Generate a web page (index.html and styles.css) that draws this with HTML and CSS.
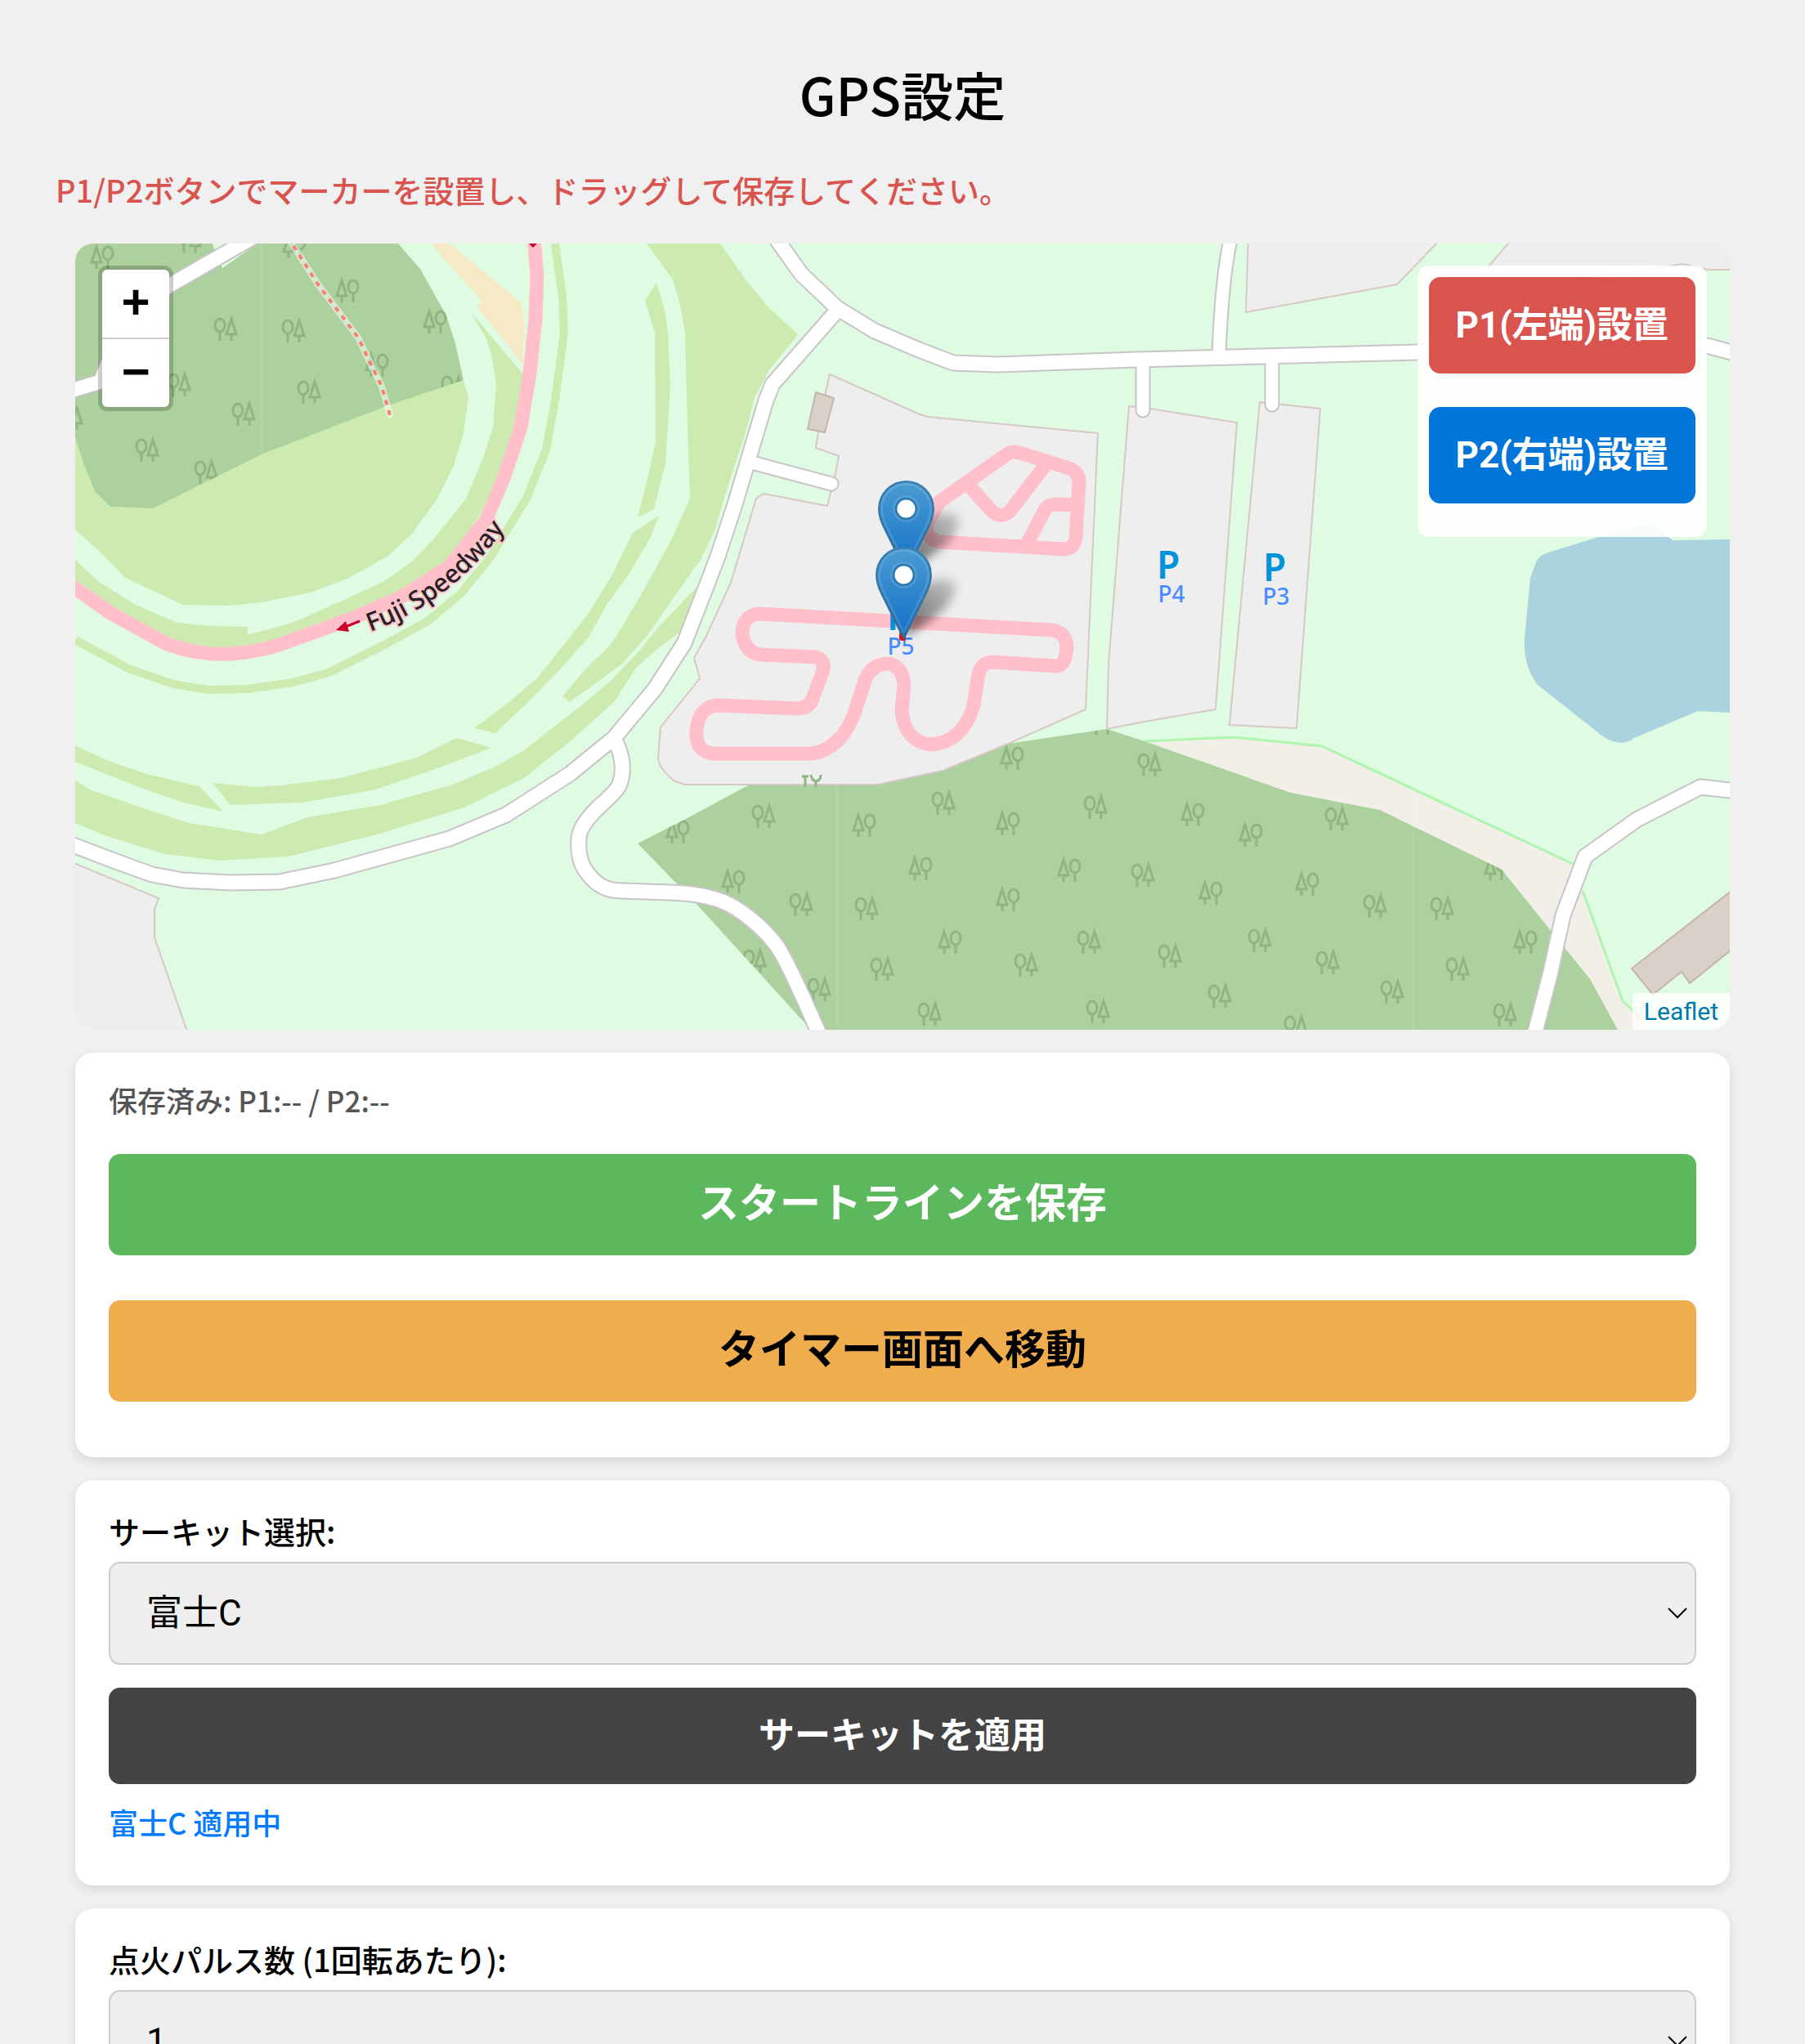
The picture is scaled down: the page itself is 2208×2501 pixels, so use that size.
FILE: index.html
```html
<!DOCTYPE html>
<html lang="ja">
<head>
    <meta charset="UTF-8">
    <meta name="viewport" content="width=device-width, initial-scale=1.0">
    <title>GPS設定</title>
    <link rel="stylesheet" href="styles.css">
</head>
<body>
    <main class="page">
        <h1>GPS設定</h1>
        <p class="notice">P1/P2ボタンでマーカーを設置し、ドラッグして保存してください。</p>

        <div class="map">
            <svg class="map-canvas" viewBox="92 298 2024 962" preserveAspectRatio="xMidYMid slice" role="img" aria-label="地図">
                <defs>
                    <g id="tree-a">
                        <path d="M-7 -13 L-13 6 H-1 Z M-7 6 V14"/>
                        <path d="M7 3 V14"/>
                        <ellipse cx="7" cy="-5" rx="6" ry="8"/>
                    </g>
                    <g id="tree-b">
                        <path d="M7 -13 L1 6 H13 Z M7 6 V14"/>
                        <path d="M-7 3 V14"/>
                        <ellipse cx="-7" cy="-5" rx="6" ry="8"/>
                    </g>
                    <path id="wood-west-shape" d="M92 298 H260 L264 311 272 328 315 298 H487 L514 329 546 386 557 420 567 465 475 496 322 555 187 622 135 620 116 601 102 566 92 535Z"/>
                    <path id="wood-south-shape" d="M780 1032 L837 1003 917 960 H1073 L1153 943 1233 910 1354 892 1400 907 1579 970 1688 991 1837 1064 1898 1140 1945 1198 1979 1260 H992 L851 1105Z"/>
                    <clipPath id="wood-west"><use href="#wood-west-shape"/></clipPath>
                    <clipPath id="wood-south"><use href="#wood-south-shape"/></clipPath>
                    <linearGradient id="pin-fill" x1="0" y1="0" x2="0" y2="1">
                        <stop offset="0" stop-color="#4b9cd3"/>
                        <stop offset="1" stop-color="#126fc6"/>
                    </linearGradient>
                    <linearGradient id="pin-edge" x1="0" y1="0" x2="0" y2="1">
                        <stop offset="0" stop-color="#3a80b4"/>
                        <stop offset="1" stop-color="#2e6c97"/>
                    </linearGradient>
                    <linearGradient id="shadow-fill" x1="0" y1="1" x2="1" y2="0">
                        <stop offset="0" stop-color="#000" stop-opacity="0.6"/>
                        <stop offset="1" stop-color="#000" stop-opacity="0.15"/>
                    </linearGradient>
                    <filter id="soft" x="-50%" y="-50%" width="200%" height="200%">
                        <feGaussianBlur stdDeviation="6"/>
                    </filter>
                    <g id="pin">
                        <path d="M12.5 .5C5.9 .5 .5 5.9 .5 12.5c0 3 .9 5.600 2.300 8.400L12.500 40.500 22.200 20.900c1.400-2.800 2.300-5.400 2.300-8.400C24.500 5.900 19.100 .5 12.500 .5z" fill="url(#pin-fill)" stroke="url(#pin-edge)"/>
                        <path d="M12.500 1.600C6.500 1.600 1.600 6.500 1.600 12.500c0 2.800 .9 5.300 2.200 7.900L12.500 38l8.700-17.600c1.300-2.600 2.200-5.100 2.200-7.900C23.400 6.500 18.500 1.600 12.500 1.600z" fill="none" stroke="#fff" stroke-opacity=".12"/>
                        <circle cx="12.500" cy="12.500" r="5.500" fill="none" stroke="#fff" stroke-opacity=".12"/>
                        <circle cx="12.500" cy="12.500" r="4.500" fill="#fff" stroke="#2f7bb0"/>
                    </g>
                </defs>

                <rect class="ground" x="92" y="298" width="2024" height="962"/>

                <!-- grass -->
                <g class="grass">
                    <path d="M567 465 L573 486 567 530 555 570 535 610 505 652 475 680 425 708 380 725 320 737 280 741 224 740 185 722 152 706 125 678 92 648 V535Z"/>
                    <path d="M577 383 L595 415 601 433 607 470 603 523 590 563 570 610 530 660 503 688 469 712 414 737 358 762 302 777 303 767 260 766 217 762 166 740 121 712 92 685 V720 L140 760 200 788 277 795 340 788 430 752 492 723 532 700 559 673 585 633 608 590 626 540 635 490 640 458Z"/>
                    <path d="M803 346 L789 368 801 407 802 540 791 590 780 633 800 623 814 567 820 473 817 407 814 383Z"/>
                    <path d="M806 631 L774 652 747 707 720 750 697 780 657 830 619 862 580 891 606 897 648 857 684 820 720 780 742 740 769 703 796 657Z"/>
                    <path d="M559 903 L601 915 527 943 456 967 369 982 282 985 260 958 313 963 344 961 416 952 469 938 510 927Z"/>
                    <path d="M92 912 L130 930 179 947 244 962 273 993 224 982 170 963 92 932Z"/>
                    <path d="M791 298 H881 L912 342 939 375 976 409 941 453 923 487 912 530 892 590 874 650 858 683 823 733 790 780 760 813 697 859 688 852 715 820 746 790 753 780 787 723 823 657 844 610 841 523 838 407 832 373 823 342Z"/>
                    <path d="M92 955 L112 967 170 987 231 1007 320 1021 376 1000 465 985 554 960 608 937 641 918 724 853 747 833 785 793 803 770 858 712 845 750 830 775 805 793 778 817 752 858 700 905 641 952 568 988 465 1020 353 1048 269 1053 202 1045 130 1023 92 1007Z"/>
                </g>
                <path class="grass-line" d="M679 298 L688 363 690 407 679 490 668 550 644 610 599 683 563 727 523 760 474 787 402 823 358 835 304 843 255 844 211 837 157 818 92 783"/>
                <path class="sand" d="M527 298 H550 L637 370 642 397 639 445 584 376 589 368Z"/>

                <!-- bare land, woods and water -->
                <path class="land" d="M1354 892 L1400 907 1509 902 1617 913 1926 1058 1936 1090 1985 1225 2009 1247 V1260 H1979 L1837 1064 1579 970Z"/>
                <path class="hedge" d="M1400 907 L1509 902 1617 913 1926 1058 M1936 1090 L1985 1225 2009 1247"/>
                <use class="wood" href="#wood-west-shape"/>
                <use class="wood" href="#wood-south-shape"/>
                <path class="water" d="M2116 660 L2046 661 2020 640 1952 658 1891 677 Q1882 681 1879 688 L1872 707 1865 780 Q1863 815 1881 838 L1962 902 Q1985 915 1999 903 L2077 870 2116 872Z"/>

                <g class="trees" clip-path="url(#wood-west)">
                    <use href="#tree-a" x="125" y="315"/>
                    <use href="#tree-a" x="360" y="302"/>
                    <use href="#tree-a" x="425" y="356"/>
                    <use href="#tree-a" x="532" y="394"/>
                    <use href="#tree-a" x="461" y="447"/>
                    <use href="#tree-b" x="232" y="295"/>
                    <use href="#tree-b" x="276" y="403"/>
                    <use href="#tree-b" x="359" y="405"/>
                    <use href="#tree-b" x="219" y="471"/>
                    <use href="#tree-b" x="378" y="480"/>
                    <use href="#tree-b" x="298" y="507"/>
                    <use href="#tree-b" x="180" y="551"/>
                    <use href="#tree-b" x="252" y="578"/>
                    <use href="#tree-b" x="554" y="474"/>
                    <use href="#tree-b" x="87" y="512"/>
                </g>
                <g class="trees" clip-path="url(#wood-south)">
                    <use href="#tree-a" x="1238" y="928"/>
                    <use href="#tree-a" x="1057" y="1010"/>
                    <use href="#tree-a" x="1233" y="1008"/>
                    <use href="#tree-a" x="1126" y="1063"/>
                    <use href="#tree-a" x="1308" y="1065"/>
                    <use href="#tree-a" x="1233" y="1101"/>
                    <use href="#tree-a" x="1162" y="1153"/>
                    <use href="#tree-a" x="897" y="1079"/>
                    <use href="#tree-a" x="829" y="1018"/>
                    <use href="#tree-a" x="1459" y="997"/>
                    <use href="#tree-a" x="1530" y="1022"/>
                    <use href="#tree-a" x="1481" y="1093"/>
                    <use href="#tree-a" x="1599" y="1082"/>
                    <use href="#tree-a" x="1866" y="1153"/>
                    <use href="#tree-a" x="1830" y="1063"/>
                    <use href="#tree-b" x="1406" y="936"/>
                    <use href="#tree-b" x="1154" y="983"/>
                    <use href="#tree-b" x="1340" y="988"/>
                    <use href="#tree-b" x="934" y="999"/>
                    <use href="#tree-b" x="1398" y="1071"/>
                    <use href="#tree-b" x="980" y="1107"/>
                    <use href="#tree-b" x="1060" y="1112"/>
                    <use href="#tree-b" x="1332" y="1153"/>
                    <use href="#tree-b" x="1255" y="1181"/>
                    <use href="#tree-b" x="1079" y="1186"/>
                    <use href="#tree-b" x="1002" y="1211"/>
                    <use href="#tree-b" x="923" y="1176"/>
                    <use href="#tree-b" x="1137" y="1241"/>
                    <use href="#tree-b" x="1343" y="1238"/>
                    <use href="#tree-b" x="1635" y="1002"/>
                    <use href="#tree-b" x="1682" y="1109"/>
                    <use href="#tree-b" x="1764" y="1112"/>
                    <use href="#tree-b" x="1541" y="1151"/>
                    <use href="#tree-b" x="1431" y="1170"/>
                    <use href="#tree-b" x="1624" y="1178"/>
                    <use href="#tree-b" x="1783" y="1186"/>
                    <use href="#tree-b" x="1703" y="1214"/>
                    <use href="#tree-b" x="1492" y="1219"/>
                    <use href="#tree-b" x="1841" y="1242"/>
                    <use href="#tree-b" x="1585" y="1257"/>
                    <path d="M1341 893 V899 M1355 893 V899"/>
                </g>

                <!-- car parks -->
                <g class="parking">
                    <path d="M1015 458 L1125 507 1135 510 1343 530 1328 868 1233 910 1153 943 1073 960 H837 L824 955 Q806 940 805 927 L808 890 856 830 849 805 863 780 894 713 925 610 934 604 1012 619 1022 580 1026 558 998 548 1002 523 1010 480Z"/>
                    <path d="M1381 497 L1407 500 1513 517 1487 868 1400 883 1354 892 1356 813Z"/>
                    <path d="M1541 492 L1615 500 1586 891 1504 887Z"/>
                    <path d="M1527 290 L1524 382 1709 348 1765 290Z"/>
                    <path d="M1852 290 L1800 350 1985 335 2058 323 2090 330 2120 330 V290Z"/>
                    <path d="M88 1055 L194 1099 189 1113 V1147 L230 1265 H88Z"/>
                </g>
                <g class="trees"><path d="M981 950 H989 M985 950 V963 M992 948 Q993 955 998 956 Q1004 955 1004 948 M998 956 V963"/></g>
                <path class="building" d="M998 480 L1020 487 1009 529 988 525Z"/>
                <path class="building" d="M1996 1185 L2118 1090 V1162 L2067 1203 2057 1189 2022 1217Z"/>

                <!-- roads: casing first, then the white fill -->
                <g class="road-casing">
                    <path d="M80 1030 L92 1035 139 1053 186 1070 224 1077 282 1080 342 1079 409 1065 550 1026 619 997 697 947 751 903 801 843 837 787 865 715 879 678 899 617 914 567 937 490 945 470 1024 380"/>
                    <path d="M948 290 L980 335 1024 377 1070 405 1124 428 1166 444 1220 446 1390 440 1734 431 2060 418 2088 423 2125 433"/>
                    <path class="narrow" d="M1506 290 Q1495 335 1491 433 M1398 440 V502 M1556 437 V495 M916 565 L1017 592"/>
                    <path d="M751 903 Q768 935 757 962 Q750 972 735 985 Q708 1010 708 1027 Q706 1055 720 1070 Q735 1090 760 1090 L818 1092 Q870 1093 898 1110 Q930 1130 950 1157 Q963 1175 1002 1265"/>
                    <path d="M1876 1270 L1896 1193 1912 1120 1939 1048 2002 1003 2080 963 2125 968"/>
                    <path d="M80 480 L123 467 150 400 206 350 310 290"/>
                </g>
                <g class="road">
                    <path d="M80 1030 L92 1035 139 1053 186 1070 224 1077 282 1080 342 1079 409 1065 550 1026 619 997 697 947 751 903 801 843 837 787 865 715 879 678 899 617 914 567 937 490 945 470 1024 380"/>
                    <path d="M948 290 L980 335 1024 377 1070 405 1124 428 1166 444 1220 446 1390 440 1734 431 2060 418 2088 423 2125 433"/>
                    <path class="narrow" d="M1506 290 Q1495 335 1491 433 M1398 440 V502 M1556 437 V495 M916 565 L1017 592"/>
                    <path d="M751 903 Q768 935 757 962 Q750 972 735 985 Q708 1010 708 1027 Q706 1055 720 1070 Q735 1090 760 1090 L818 1092 Q870 1093 898 1110 Q930 1130 950 1157 Q963 1175 1002 1265"/>
                    <path d="M1876 1270 L1896 1193 1912 1120 1939 1048 2002 1003 2080 963 2125 968"/>
                    <path d="M80 480 L123 467 150 400 206 350 310 290"/>
                </g>
                <path class="path-base" d="M352 290 L389 348 438 413 467 473 477 508"/>
                <path class="path-dash" d="M352 290 L389 348 438 413 467 473 477 508"/>

                <!-- race tracks -->
                <g class="track">
                    <path d="M653 290 L657 337 655 390 648 457 637 523 617 583 594 637 550 693 492 730 430 757 358 783 Q325 797 282 800 Q240 802 202 787 L135 750 85 715"/>
                    <path d="M930 751 L1287 771 Q1305 774 1305 793 Q1303 815 1292 815 L1214 810 Q1199 810 1196 830 L1191 863 Q1178 908 1139 911 Q1107 908 1103 870 L1106 837 Q1103 813 1085 812 Q1067 813 1059 830 L1045 873 Q1028 917 993 922 H872 Q850 920 852 893 Q855 863 880 863 L974 867 Q990 867 994 855 L1007 820 Q1009 806 997 804 L930 801 Q912 799 908 776 Q908 752 930 751Z"/>
                    <path d="M1149 614 L1230 557 Q1238 551 1247 554 L1308 573 Q1320 578 1320 590 L1316 658 Q1314 672 1301 672 L1149 663 Q1130 658 1134 640Z"/>
                    <path d="M1187 596 L1213 625 Q1224 636 1236 625 L1278 570 M1316 618 L1291 617 Q1282 617 1278 624 L1256 666"/>
                </g>
                <path class="arrow-line" d="M440 760 L420 768"/>
                <path class="arrow-head" d="M411 771 L423 760 427 773Z M647 298 H657 L652 303Z"/>
                <path id="track-label" d="M453 773 Q560 734 626 634" fill="none"/>
                <text class="track-name"><textPath href="#track-label">Fuji Speedway</textPath></text>

                <!-- parking labels -->
                <g class="parking-sign">
                    <text x="1415" y="708">P</text>
                    <text x="1545" y="711">P</text>
                    <text x="1085" y="771">P</text>
                </g>
                <g class="parking-name">
                    <text x="1433" y="737">P4</text>
                    <text x="1561" y="740">P3</text>
                    <text x="1102" y="801">P5</text>
                </g>

                <path class="seam" d="M320 298 V1260 M1024 298 V1260 M1729 298 V1260"/>

                <!-- start line and its two pins -->
                <path class="start-line" d="M1108 702 L1104 780"/>
                <path class="pin-shadow" filter="url(#soft)" d="M1110 698 L1124 646 Q1150 618 1172 632 Q1180 660 1110 698Z"/>
                <path class="pin-shadow" filter="url(#soft)" d="M1106 779 L1120 727 Q1146 699 1168 713 Q1176 741 1106 779Z"/>
                <svg x="1074" y="588" width="69" height="113" viewBox="0 0 25 41"><use href="#pin"/></svg>
                <svg x="1071" y="669" width="69" height="113" viewBox="0 0 25 41"><use href="#pin"/></svg>
            </svg>

            <div class="zoom-control">
                <a href="#" title="Zoom in" aria-label="Zoom in">+</a>
                <a href="#" title="Zoom out" aria-label="Zoom out">−</a>
            </div>

            <div class="map-buttons">
                <button type="button" class="btn btn-p1">P1(左端)設置</button>
                <button type="button" class="btn btn-p2">P2(右端)設置</button>
            </div>

            <div class="attribution"><a href="#">Leaflet</a></div>
        </div>

        <section class="card">
            <p class="saved">保存済み: P1:-- / P2:--</p>
            <div class="actions">
                <button type="button" class="btn btn-large btn-save">スタートラインを保存</button>
                <button type="button" class="btn btn-large btn-timer">タイマー画面へ移動</button>
            </div>
        </section>

        <section class="card">
            <label for="circuit">サーキット選択:</label>
            <div class="select-wrap">
                <select id="circuit">
                    <option selected>富士C</option>
                </select>
                <svg class="chevron" viewBox="0 0 26 16" aria-hidden="true"><path d="M2 2 L13 13 L24 2"/></svg>
            </div>
            <button type="button" class="btn btn-apply">サーキットを適用</button>
            <p class="applied">富士C 適用中</p>
        </section>

        <section class="card">
            <label for="pulse">点火パルス数 (1回転あたり):</label>
            <div class="select-wrap">
                <select id="pulse">
                    <option selected>1</option>
                    <option>2</option>
                </select>
                <svg class="chevron" viewBox="0 0 26 16" aria-hidden="true"><path d="M2 2 L13 13 L24 2"/></svg>
            </div>
        </section>
    </main>
</body>
</html>
```

FILE: styles.css
```css
* {
    margin: 0;
    padding: 0;
    box-sizing: border-box;
}

body {
    font-family: "Noto Sans CJK JP", sans-serif;
    font-weight: 500;
    background: #f0f0f0;
    color: #000;
}

.page {
    padding: 64px 68px 0;
}

h1 {
    font-size: 64px;
    font-weight: 500;
    line-height: 100px;
    text-align: center;
}

.notice {
    margin: 40px 0 38px;
    font-size: 38px;
    line-height: 56px;
    color: #d9534f;
}

/* Map */
.map {
    position: relative;
    height: 962px;
    margin: 0 24px 28px;
    border-radius: 22px;
    overflow: hidden;
}

.map-canvas {
    display: block;
    width: 100%;
    height: 100%;
}

.ground { fill: #dffce2; }
.grass { fill: #cdebb0; }
.grass-line { fill: none; stroke: #cdebb0; stroke-width: 10; }
.sand { fill: #f5e9c6; }
.land { fill: #f2efe9; }
.hedge { fill: none; stroke: #aef5ae; stroke-width: 3; }
.wood { fill: #add19e; }
.water { fill: #aad3df; }
.trees { fill: none; stroke: #8fb583; stroke-width: 3; }
.parking { fill: #eee; stroke: #d8c8c5; stroke-width: 2; }
.building { fill: #d9d0c9; stroke: #c5b5ac; stroke-width: 2; }

.road-casing,
.road {
    fill: none;
    stroke-linecap: round;
    stroke-linejoin: round;
}

.road-casing { stroke: #c8c4c8; stroke-width: 21; }
.road { stroke: #fff; stroke-width: 17; }
.road-casing .narrow { stroke-width: 19; }
.road .narrow { stroke-width: 15; }

.path-base { fill: none; stroke: #fff; stroke-opacity: 0.5; stroke-width: 8; stroke-linecap: round; }
.path-dash { fill: none; stroke: #fa8072; stroke-width: 4; stroke-dasharray: 6 7; }

.track { fill: none; stroke: #ffc0cb; stroke-width: 17; }
.arrow-line { stroke: #c8002a; stroke-width: 3; }
.arrow-head { fill: #c8002a; }

.track-name {
    font-family: "Noto Sans", sans-serif;
    font-size: 31px;
    font-weight: 500;
    fill: #222;
    stroke: #ffc0cb;
    stroke-width: 4;
    paint-order: stroke;
}

.parking-sign {
    font-family: "Noto Sans", sans-serif;
    font-size: 46px;
    font-weight: 600;
    fill: #0092da;
}

.parking-name {
    font-family: "Noto Sans", sans-serif;
    font-size: 28px;
    font-weight: 500;
    fill: #4a8cff;
    text-anchor: middle;
}

.seam { stroke: #fff; stroke-opacity: 0.2; stroke-width: 1; }
.start-line { stroke: #f00; stroke-width: 8; stroke-linecap: round; }
.pin-shadow { fill: url(#shadow-fill); }

.zoom-control {
    position: absolute;
    top: 27px;
    left: 28px;
    border: 5px solid rgba(0, 0, 0, 0.2);
    border-radius: 11px;
    background: #fff;
    background-clip: padding-box;
}

.zoom-control a {
    display: block;
    width: 82px;
    height: 83px;
    font-family: "Liberation Sans", sans-serif;
    font-size: 60px;
    font-weight: 700;
    line-height: 80px;
    text-align: center;
    text-decoration: none;
    color: #000;
}

.zoom-control a:first-child {
    height: 85px;
    border-bottom: 2px solid #ccc;
}

.map-buttons {
    position: absolute;
    top: 27px;
    right: 28px;
    display: flex;
    flex-direction: column;
    gap: 41px;
    padding: 14px 14px 41px;
    border-radius: 14px;
    background: rgba(255, 255, 255, 0.9);
}

.attribution {
    position: absolute;
    right: 0;
    bottom: 0;
    padding: 0 14px;
    background: rgba(255, 255, 255, 0.8);
    font-family: Roboto, sans-serif;
    font-size: 30px;
    font-weight: 400;
    line-height: 45px;
}

.attribution a {
    color: #0078a8;
    text-decoration: none;
}

/* Buttons */
.btn {
    height: 118px;
    padding: 0 33px 8px;
    border: none;
    border-radius: 14px;
    font-family: Roboto, "Noto Sans CJK JP", sans-serif;
    font-size: 44px;
    font-weight: 700;
    color: #fff;
    cursor: pointer;
}

.btn-large {
    height: 124px;
    padding-bottom: 12px;
    font-size: 50px;
}

.btn-p1 { background: #d9534f; }
.btn-p2 { background: #0275d8; }
.btn-save { background: #5cb85c; }
.btn-timer { background: #f0ad4e; color: #000; }
.btn-apply { width: 100%; background: #444; }

/* Cards */
.card {
    margin: 0 24px 28px;
    padding: 34px 41px 52px;
    border-radius: 22px;
    background: #fff;
    box-shadow: 0 5px 14px rgba(0, 0, 0, 0.1);
}

.saved {
    margin-bottom: 42px;
    font-size: 35px;
    line-height: 48px;
    color: #555;
}

.applied {
    margin-top: 20px;
    font-size: 36px;
    line-height: 52px;
    color: #007bff;
}

.actions {
    display: flex;
    flex-direction: column;
    gap: 55px;
    margin-bottom: 16px;
}

.card label {
    display: block;
    margin-bottom: 10px;
    font-size: 38px;
    line-height: 56px;
}

.select-wrap {
    position: relative;
    margin-bottom: 28px;
}

.select-wrap select {
    display: block;
    width: 100%;
    height: 126px;
    padding: 0 44px;
    border: 2px solid #ccc;
    border-radius: 14px;
    background: #efefef;
    font-family: Roboto, "Noto Sans CJK JP", sans-serif;
    font-size: 44px;
    color: #000;
    appearance: none;
}

.chevron {
    position: absolute;
    top: 55px;
    right: 10px;
    width: 26px;
    height: 16px;
    fill: none;
    stroke: #000;
    stroke-width: 2;
    pointer-events: none;
}
```
